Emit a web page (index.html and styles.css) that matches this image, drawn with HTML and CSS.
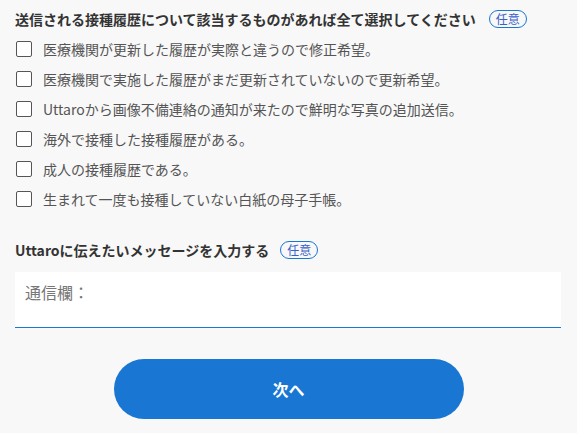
FILE: index.html
```html
<!DOCTYPE html>
<html lang="ja">
<head>
<meta charset="utf-8">
<link rel="stylesheet" href="styles.css">
</head>
<body>
<main class="page">
  <section class="group">
    <h2 class="heading">送信される接種履歴について該当するものがあれば全て選択してください<span class="badge">任意</span></h2>
    <ul class="options">
      <li class="option"><label><input type="checkbox" class="box"><span>医療機関が更新した履歴が実際と違うので修正希望。</span></label></li>
      <li class="option"><label><input type="checkbox" class="box"><span>医療機関で実施した履歴がまだ更新されていないので更新希望。</span></label></li>
      <li class="option"><label><input type="checkbox" class="box"><span>Uttaroから画像不備連絡の通知が来たので鮮明な写真の追加送信。</span></label></li>
      <li class="option"><label><input type="checkbox" class="box"><span>海外で接種した接種履歴がある。</span></label></li>
      <li class="option"><label><input type="checkbox" class="box"><span>成人の接種履歴である。</span></label></li>
      <li class="option"><label><input type="checkbox" class="box"><span>生まれて一度も接種していない白紙の母子手帳。</span></label></li>
    </ul>
  </section>
  <section class="group message">
    <h2 class="heading">Uttaroに伝えたいメッセージを入力する<span class="badge">任意</span></h2>
    <div class="field">
      <textarea class="memo" placeholder="通信欄："></textarea>
    </div>
  </section>
  <div class="actions">
    <button class="next" type="button">次へ</button>
  </div>
</main>
</body>
</html>
```

FILE: styles.css
```css
html, body {
  margin: 0;
  padding: 0;
  background: #f8f8f8;
}
body {
  font-family: "Noto Sans CJK JP", "Noto Sans", sans-serif;
  color: #444;
}
.page {
  padding: 8px 16px 0 15px;
}
.heading {
  margin: 0;
  font-size: 14px;
  font-weight: 700;
  line-height: 22px;
  color: #333;
  display: flex;
  align-items: center;
}
.badge {
  display: inline-flex;
  align-items: center;
  margin-left: 13px;
  height: 18px;
  padding: 0 6px;
  border: 1px solid #1976d2;
  border-radius: 10px;
  font-size: 12px;
  font-weight: 400;
  color: #3a5fc8;
  line-height: 1;
  box-sizing: border-box;
}
.message .badge {
  margin-left: 11px;
}
.options {
  list-style: none;
  margin: 4px 0 0;
  padding: 0;
}
.option label {
  display: flex;
  align-items: center;
  height: 30px;
  font-size: 14px;
  color: #555;
}
.box {
  appearance: none;
  -webkit-appearance: none;
  margin: 0 11px 0 1px;
  width: 16px;
  height: 16px;
  border: 1.5px solid #555;
  border-radius: 2px;
  background: #fff;
  box-sizing: border-box;
  flex: none;
}
.message {
  margin-top: 25px;
}
.field {
  margin-top: 11px;
  background: #fff;
  border-bottom: 1px solid #1976d2;
}
.memo {
  display: block;
  width: 100%;
  height: 55px;
  box-sizing: border-box;
  border: none;
  background: transparent;
  padding: 8px 10px;
  font-family: "Noto Sans CJK JP", "Noto Sans", sans-serif;
  font-size: 16px;
  line-height: 24px;
  resize: none;
  outline: none;
}
.memo::placeholder {
  color: #777;
}
.actions {
  display: flex;
  justify-content: center;
  margin-top: 31px;
}
.next {
  width: 350px;
  height: 60px;
  margin-left: 1px;
  border: none;
  border-radius: 30px;
  background: #1976d2;
  color: #fff;
  font-family: "Noto Sans CJK JP", "Noto Sans", sans-serif;
  font-size: 16px;
  font-weight: 700;
}
```
